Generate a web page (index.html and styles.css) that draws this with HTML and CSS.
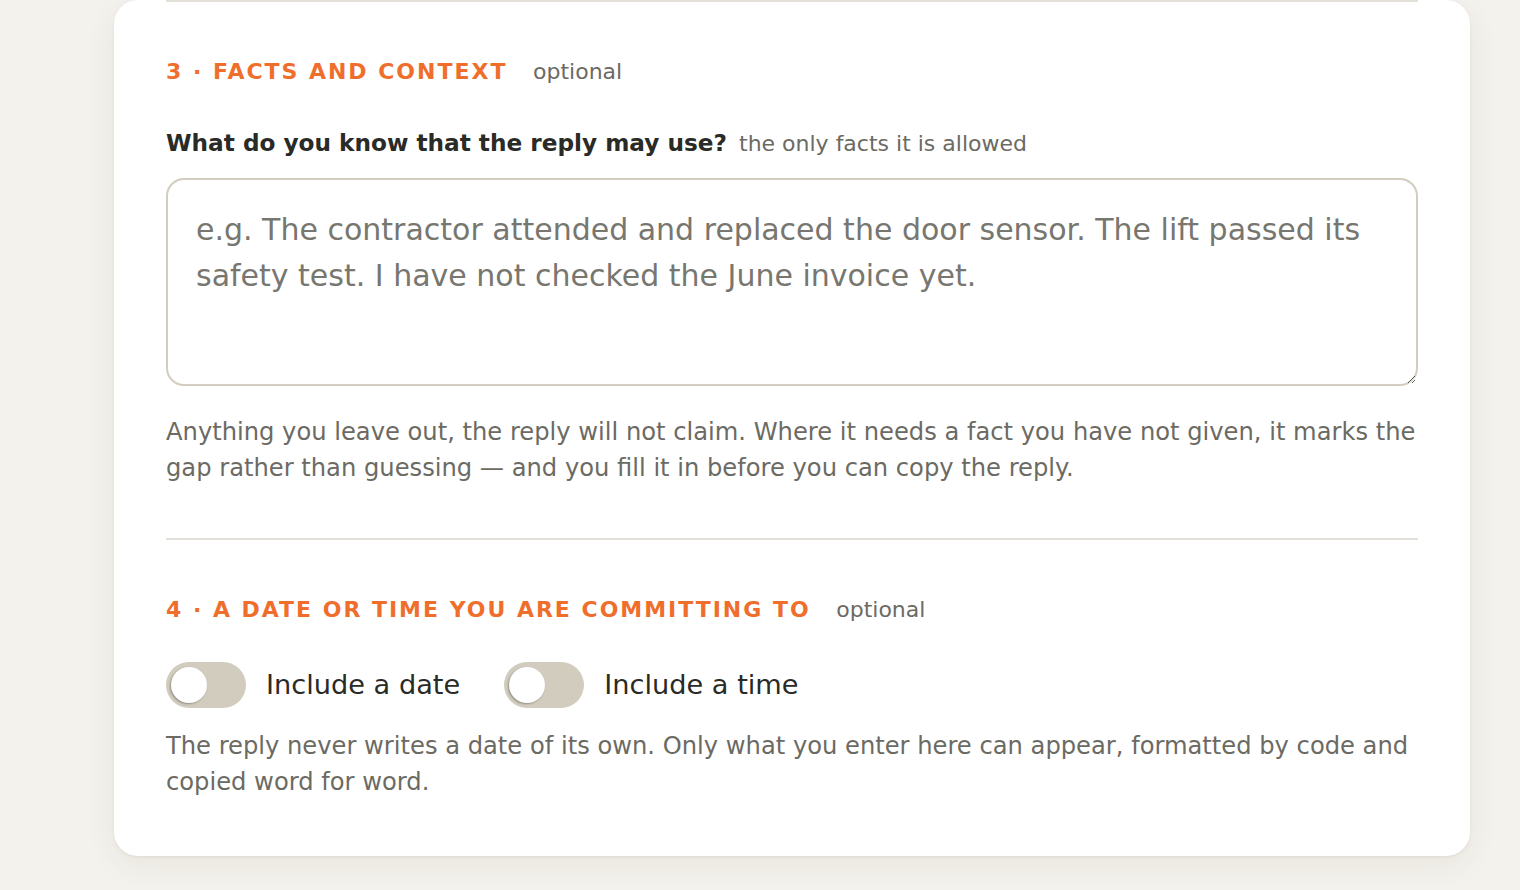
FILE: index.html
```html
<!DOCTYPE html>
<html lang="en">
<head>
  <meta charset="UTF-8" />
  <meta name="viewport" content="width=device-width, initial-scale=1.0"/>
  <title>Reply builder</title>
  <link rel="stylesheet" href="styles.css">
</head>
<body>
  <div class="page">
    <div class="card">
      <section class="step">
        <h3 class="step-title">3 · Facts and context <span class="opt">optional</span></h3>
        <label class="field-label" for="facts">What do you know that the reply may use? <span class="hint">the only facts it is allowed</span></label>
        <textarea id="facts" class="facts" placeholder="e.g. The contractor attended and replaced the door sensor. The lift passed its safety test. I have not checked the June invoice yet."></textarea>
        <p class="help">Anything you leave out, the reply will not claim. Where it needs a fact you have not given, it marks the gap rather than guessing — and you fill it in before you can copy the reply.</p>
      </section>

      <section class="step">
        <h3 class="step-title">4 · A date or time you are committing to <span class="opt">optional</span></h3>
        <div class="toggles">
          <label class="toggle">
            <input type="checkbox" id="useDate" />
            <span class="track"><span class="knob"></span></span>
            Include a date
          </label>
          <label class="toggle">
            <input type="checkbox" id="useTime" />
            <span class="track"><span class="knob"></span></span>
            Include a time
          </label>
        </div>
        <p class="help">The reply never writes a date of its own. Only what you enter here can appear, formatted by code and copied word for word.</p>
      </section>
    </div>
  </div>
</body>
</html>
```

FILE: styles.css
```css
body {
  margin: 0;
  background: #f4f2ed;
  font-family: "DejaVu Sans", Verdana, sans-serif;
  color: #2a2a26;
}

.page {
  padding: 0 50px 34px 114px;
}

.card {
  background: #fff;
  border-radius: 24px;
  padding: 0 52px 56px;
  margin-top: -40px;
  box-shadow: 0 8px 30px rgba(70, 60, 30, 0.07), 0 1px 3px rgba(70, 60, 30, 0.08);
}

.step {
  border-top: 2px solid #e3e0d7;
  padding: 56px 0 52px;
}

.card .step:first-child {
  margin-top: 40px;
}

.card .step:last-child {
  padding-bottom: 0;
}

.step-title {
  margin: 0 0 41px;
  font-size: 22px;
  line-height: 28px;
  font-weight: bold;
  letter-spacing: 0.09em;
  text-transform: uppercase;
  color: #ef6e2c;
}

.opt {
  margin-left: 16px;
  font-size: 22px;
  font-weight: normal;
  letter-spacing: 0;
  text-transform: none;
  color: #6b6a63;
}

.field-label {
  display: block;
  margin: 0 0 18px;
  font-size: 23.2px;
  line-height: 32px;
  font-weight: bold;
  color: #2a2a26;
}

.hint {
  margin-left: 4px;
  font-size: 22px;
  font-weight: normal;
  color: #6b6a63;
}

.facts {
  display: block;
  box-sizing: border-box;
  width: 100%;
  height: 208px;
  margin: 0 0 28px;
  padding: 27px 28px 25px;
  border: 2px solid #d2cdbe;
  border-radius: 18px;
  font-family: "DejaVu Sans", Verdana, sans-serif;
  font-size: 30px;
  line-height: 46px;
  color: #2a2a26;
  resize: vertical;
  outline: none;
}

.facts::placeholder {
  color: #77766f;
}

.help {
  margin: 0;
  font-size: 24.2px;
  line-height: 36px;
  color: #6b6a63;
}

.toggles {
  display: flex;
  gap: 44px;
  margin: -3px 0 20px;
}

.toggle {
  display: flex;
  align-items: center;
  gap: 20px;
  font-size: 27.2px;
  line-height: 46px;
  color: #2a2a26;
  cursor: pointer;
}

.toggle input {
  display: none;
}

.track {
  width: 80px;
  height: 46px;
  border-radius: 23px;
  background: #d1ccbd;
  display: flex;
  align-items: center;
  padding: 0 5px;
  box-sizing: border-box;
}

.knob {
  width: 36px;
  height: 36px;
  border-radius: 50%;
  background: #fff;
  box-shadow: -1px 1px 2px rgba(0, 0, 0, 0.3);
}

.toggle input:checked + .track {
  background: #ef6e2c;
  justify-content: flex-end;
}
```
